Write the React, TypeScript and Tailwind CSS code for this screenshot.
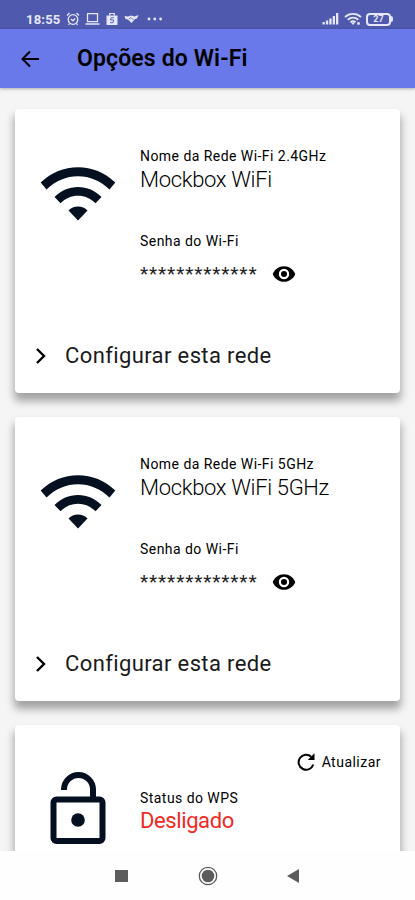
import React from 'react';

// Signal arcs used as the picture of each network card
function WifiIcon() {
  return (
    <svg width="76" height="56" viewBox="0 0 76 56" fill="#04101f">
      <path d="M.7 16.500C11.500 6.500 24 1.300 38 1.300s26.500 5.200 37.300 15.200L69.500 23.500C60.500 14.800 50 10.200 38 10.200S15.500 14.800 6.500 23.500Z" />
      <path d="M14.500 31C21 24.500 29 21 38 21s17 3.500 23.500 10L55.500 37.300C50.500 32.400 44.800 29.800 38 29.800s-12.500 2.600-17.500 7.500Z" />
      <path d="M28.500 44.500C31 41.800 34.300 40.500 38 40.500s7 1.300 9.500 4L38 54.500Z" />
    </svg>
  );
}

function EyeIcon() {
  return (
    <svg width="24" height="24" viewBox="0 0 24 24" fill="#000">
      <path d="M12 4.200C6.800 4.200 2.500 7.400.7 12c1.800 4.600 6.100 7.800 11.300 7.800s9.500-3.200 11.300-7.800C21.500 7.400 17.200 4.200 12 4.200Zm0 13a5.200 5.200 0 1 1 0-10.400 5.200 5.200 0 0 1 0 10.400Zm0-8.200a3 3 0 1 0 0 6 3 3 0 0 0 0-6Z" />
    </svg>
  );
}

function UnlockIcon() {
  return (
    <svg width="56" height="76" viewBox="0 0 56 76" fill="none" stroke="#04101f">
      <rect x="3.500" y="27.500" width="49" height="41.500" rx="3" strokeWidth="6" />
      <path d="M14 18V17.500a14.500 14.500 0 0 1 29 0V28" strokeWidth="6" />
      <circle cx="28" cy="48" r="6.800" fill="#04101f" stroke="none" />
    </svg>
  );
}

function StatusBar() {
  return (
    <div className="flex h-[29px] shrink-0 items-center bg-[#4f59ad] pt-[9px] pl-[26px] text-[#e6e8fa]">
      <span className="w-[40px] text-[13px] leading-none font-bold tracking-[0.2px] whitespace-nowrap">18:55</span>
      {/* alarm */}
      <svg width="14" height="14" viewBox="0 0 14 14" fill="none" stroke="currentColor" strokeWidth="1.300">
        <circle cx="7" cy="7.500" r="4.800" />
        <path d="M1 3.500 3.500 1M13 3.500 10.500 1M4.800 7 7 8.800 9.200 6.500M3.500 11.500 2.500 13M10.500 11.500l1 1.500" />
      </svg>
      {/* laptop */}
      <svg className="ml-[5px]" width="15" height="14" viewBox="0 0 15 14" fill="none" stroke="currentColor" strokeWidth="1.300">
        <path d="M2.500 1.700h10v8h-10zM.5 12h14" />
      </svg>
      {/* shopping bag */}
      <svg className="ml-[6px]" width="12" height="14" viewBox="0 0 12 14">
        <path d="M.5 3.500h11V13H.5z" fill="currentColor" />
        <path d="M3.700 3.500V1.500h4.600v2" fill="none" stroke="currentColor" strokeWidth="1.200" />
        <path d="M8 5.800H5.200L4.500 8h3.200L7 10.700H4" fill="none" stroke="#4f59ad" strokeWidth=".9" />
      </svg>
      {/* handshake */}
      <svg className="ml-[6px]" width="15" height="14" viewBox="0 0 15 14" fill="currentColor">
        <path d="M.5 4 4 4.500 7 3.500l3.500 1L14.500 3 13 6.500l-2 .5-3.500 4L4 7.500 1.500 7Z" />
        <path d="m5 7 2-1.500L9.500 8" fill="none" stroke="#4f59ad" strokeWidth=".8" />
      </svg>
      <svg className="ml-[8px]" width="16" height="14" viewBox="0 0 16 14" fill="currentColor">
        <circle cx="2" cy="7" r="1.400" />
        <circle cx="7.800" cy="7" r="1.400" />
        <circle cx="13.600" cy="7" r="1.400" />
      </svg>
      {/* signal, wifi, battery */}
      <div className="ml-auto flex items-center pr-[22px]">
        <svg width="17" height="14" viewBox="0 0 17 14" fill="currentColor">
          <path d="M.5 10h2.300v2.500H.5zM3.900 8.500h2.300v4H3.900zM7.300 6.500h2.300v6H7.300zM10.700 4h2.300v8.500h-2.300zM14 1h2.300v11.500H14z" />
        </svg>
        <svg className="ml-[5px]" width="18" height="14" viewBox="0 0 18 14" fill="none" stroke="currentColor" strokeWidth="1.900">
          <path d="M1 5c4.500-4.200 11.500-4.200 16 0M3.800 7.700c3-2.800 7.400-2.800 10.400 0M6.500 10.300c1.500-1.300 3.500-1.300 5 0" />
          <path d="m7 10.500 2 2.500 2-2.500Z" fill="currentColor" stroke="none" />
          <circle cx="14.500" cy="11.500" r="1.400" fill="currentColor" stroke="none" />
        </svg>
        <div className="ml-[4px] flex items-center">
          <div className="flex h-[13px] w-[25px] items-center justify-center rounded-[4px] border-2 border-[#e6e8fa] text-[9px] leading-none font-bold">27</div>
          <div className="h-[6px] w-[2px] rounded-r-full bg-[#e6e8fa]" />
        </div>
      </div>
    </div>
  );
}

interface NetworkCardProps {
  label: string;
  name: string;
}

function NetworkCard({ label, name }: NetworkCardProps) {
  return (
    <div className="h-[284px] shrink-0 rounded-[4px] bg-white shadow-[0_7px_9px_1px_rgba(0,0,0,0.34)]">
      <div className="flex h-[224px] pt-[38px]">
        <div className="w-[125px] shrink-0 pt-[19px] pl-[25px]">
          <WifiIcon />
        </div>
        <div className="whitespace-nowrap">
          <p className="h-[18px] text-[14px] leading-[18px] tracking-[0.45px]">{label}</p>
          <p className="h-[28px] pt-px text-[22px] leading-[28px] font-light tracking-[-0.34px]">{name}</p>
          <p className="mt-[39px] text-[14px] leading-[18px] tracking-[0.45px]">Senha do Wi-Fi</p>
          <div className="mt-[12px] flex h-6 items-center">
            <span className="w-[132px] text-[19px] leading-6 tracking-[0.85px] text-[#222]">*************</span>
            <EyeIcon />
          </div>
        </div>
      </div>
      <div className="flex h-[46px] items-center pl-[20px]">
        <svg width="12" height="18" viewBox="0 0 12 18" fill="none" stroke="#000" strokeWidth="2.400">
          <path d="m2 2 7 7-7 7" />
        </svg>
        <span className="ml-[18px] text-[22px] leading-none tracking-[0.38px] text-[#1a1a1a]">Configurar esta rede</span>
      </div>
    </div>
  );
}

function WpsCard() {
  return (
    <div className="h-[284px] shrink-0 rounded-[4px] bg-white shadow-[0_7px_9px_1px_rgba(0,0,0,0.34)]">
      <div className="flex h-[47px] items-end justify-end pr-[19px]">
        <svg width="20" height="20" viewBox="0 0 20 20" fill="none" stroke="#000" strokeWidth="2">
          <path d="M17.300 12.500A7.500 7.500 0 1 1 15.200 4.700" />
          <path d="M18.500 1.200V8h-6.800Z" fill="#000" stroke="none" />
        </svg>
        <span className="ml-[6px] text-[14px] leading-[20px] tracking-[0.48px]">Atualizar</span>
      </div>
      <div className="flex">
        <div className="w-[125px] shrink-0 pl-[35px]">
          <UnlockIcon />
        </div>
        <div className="pt-[17px] whitespace-nowrap">
          <p className="text-[14px] leading-[18px] tracking-[0.45px]">Status do WPS</p>
          <p className="text-[22px] leading-[28px] tracking-[-0.4px] text-[#ee2a24]">Desligado</p>
        </div>
      </div>
    </div>
  );
}

function NavigationBar() {
  return (
    <div className="flex h-[49px] shrink-0 items-center bg-[#fefefe] pl-[115px]">
      <div className="h-[12px] w-[13px] bg-[#5c5c5c]" />
      <svg className="ml-[70px]" width="20" height="20" viewBox="0 0 20 20">
        <circle cx="10" cy="10" r="8.700" fill="none" stroke="#5c5c5c" strokeWidth="1.300" />
        <circle cx="10" cy="10" r="6.300" fill="#5c5c5c" />
      </svg>
      <svg className="ml-[69px]" width="12" height="14" viewBox="0 0 12 14">
        <path d="M0 7 12 0v14Z" fill="#5c5c5c" />
      </svg>
    </div>
  );
}

export default function App() {
  return (
    <div className="flex h-[900px] w-[415px] flex-col overflow-hidden bg-[#f5f5f5] font-[Roboto,sans-serif] text-black">
      <StatusBar />
      <header className="flex h-[59px] shrink-0 items-center bg-[#6979ea] pl-[21px] shadow-[0_1px_3px_rgba(0,0,0,0.3)]">
        <svg width="18" height="18" viewBox="0 0 18 18" fill="none" stroke="#000" strokeWidth="2">
          <path d="M18 9H2M9 1.500 1.500 9 9 16.500" />
        </svg>
        <h1 className="ml-[38px] text-[23px] leading-none font-semibold tracking-[0.13px] whitespace-nowrap">Opções do Wi-Fi</h1>
      </header>
      <main className="flex min-h-0 flex-1 flex-col gap-6 overflow-hidden pt-[21px] pr-[15px] pl-[15px]">
        <NetworkCard label="Nome da Rede Wi-Fi 2.4GHz" name="Mockbox WiFi" />
        <NetworkCard label="Nome da Rede Wi-Fi 5GHz" name="Mockbox WiFi 5GHz" />
        <WpsCard />
      </main>
      <NavigationBar />
    </div>
  );
}
